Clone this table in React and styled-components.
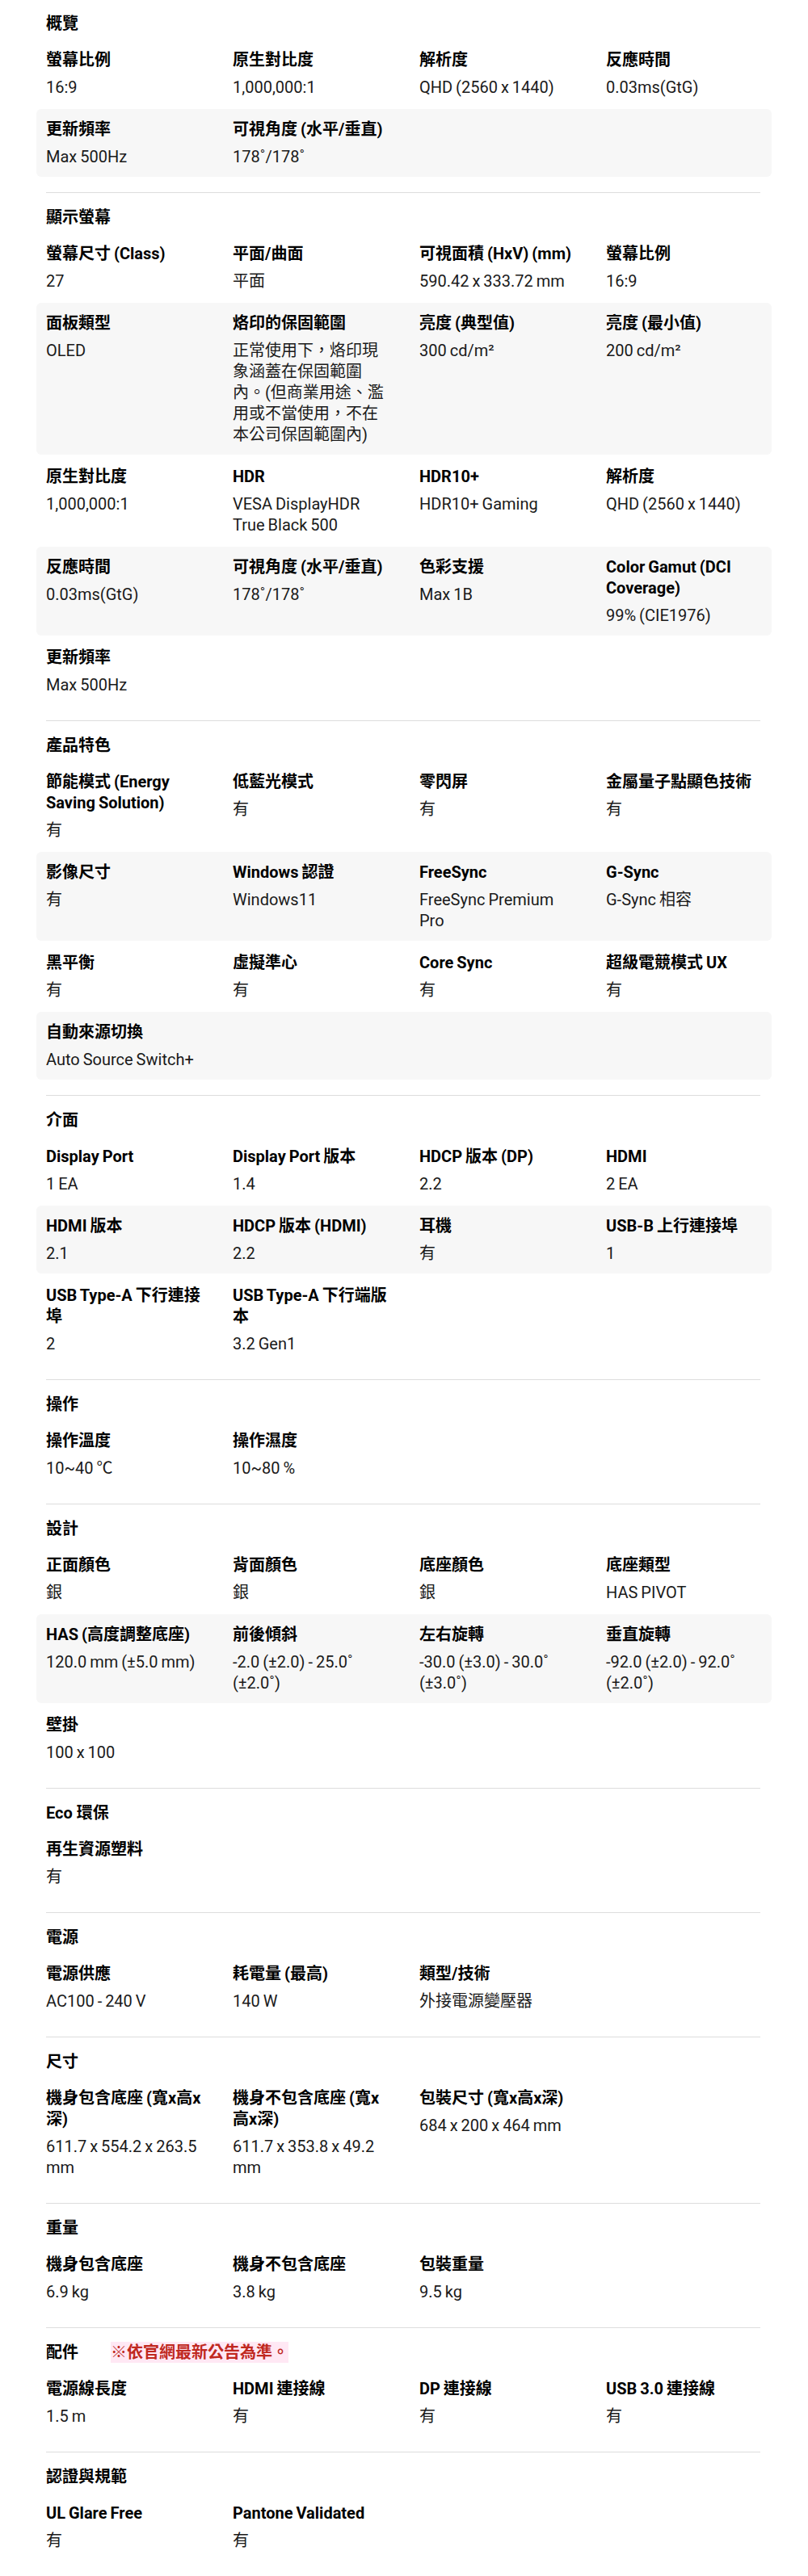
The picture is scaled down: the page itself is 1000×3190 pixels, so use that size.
import React from "react";
import styled, { createGlobalStyle } from "styled-components";

const GlobalStyle = createGlobalStyle`
  body {
    margin: 0;
    background: #fff;
    color: #000;
    font-family: Roboto, "Noto Sans CJK TC", sans-serif;
    -webkit-font-smoothing: antialiased;
  }
`;

const Page = styled.div`
  width: 910px;
  padding: 0 0 16px 45px;
`;

const Section = styled.section`
  padding: ${(p) => (p.$first ? "16px" : "17px")} 0 19px;
`;

const Divider = styled.hr`
  margin: 0 14px 0 12px;
  border: 0;
  border-top: 1px solid #dddddd;
`;

const Heading = styled.h3`
  display: flex;
  align-items: center;
  gap: 40px;
  margin: 0 0 7px 12px;
  font-size: 20px;
  line-height: 26px;
  font-weight: 700;
`;

const Note = styled.span`
  color: #c0281f;
  background: #ffe8f4;
  font-weight: 700;
`;

const Rows = styled.div`
  display: flex;
  flex-direction: column;
  gap: 2px;
`;

const Row = styled.div`
  display: grid;
  grid-template-columns: repeat(4, 231px);
  padding: 12px 0 12px 12px;
  border-radius: 6px;
  background: ${(p) => (p.$shaded ? "#f7f7f7" : "transparent")};
`;

const Item = styled.div`
  display: flex;
  flex-direction: column;
  gap: 8px;
  padding-right: 34px;
  font-size: 20px;
  line-height: 26px;
  word-spacing: -1px;
`;

const Label = styled.div`
  font-weight: 700;
`;

const Value = styled.div`
  font-weight: 400;
  color: #1a1a1a;
`;

const specs = [
  {
    title: "概覽",
    rows: [
      [
        ["螢幕比例", "16:9"],
        ["原生對比度", "1,000,000:1"],
        ["解析度", "QHD (2560 x 1440)"],
        ["反應時間", "0.03ms(GtG)"],
      ],
      [
        ["更新頻率", "Max 500Hz"],
        ["可視角度 (水平/垂直)", "178˚/178˚"],
      ],
    ],
  },
  {
    title: "顯示螢幕",
    rows: [
      [
        ["螢幕尺寸 (Class)", "27"],
        ["平面/曲面", "平面"],
        ["可視面積 (HxV) (mm)", "590.42 x 333.72 mm"],
        ["螢幕比例", "16:9"],
      ],
      [
        ["面板類型", "OLED"],
        ["烙印的保固範圍", "正常使用下，烙印現象涵蓋在保固範圍內。(但商業用途、濫用或不當使用，不在本公司保固範圍內)"],
        ["亮度 (典型值)", "300 cd/m²"],
        ["亮度 (最小值)", "200 cd/m²"],
      ],
      [
        ["原生對比度", "1,000,000:1"],
        ["HDR", "VESA DisplayHDR True Black 500"],
        ["HDR10+", "HDR10+ Gaming"],
        ["解析度", "QHD (2560 x 1440)"],
      ],
      [
        ["反應時間", "0.03ms(GtG)"],
        ["可視角度 (水平/垂直)", "178˚/178˚"],
        ["色彩支援", "Max 1B"],
        ["Color Gamut (DCI Coverage)", "99% (CIE1976)"],
      ],
      [["更新頻率", "Max 500Hz"]],
    ],
  },
  {
    title: "產品特色",
    rows: [
      [
        ["節能模式 (Energy Saving Solution)", "有"],
        ["低藍光模式", "有"],
        ["零閃屏", "有"],
        ["金屬量子點顯色技術", "有"],
      ],
      [
        ["影像尺寸", "有"],
        ["Windows 認證", "Windows11"],
        ["FreeSync", "FreeSync Premium Pro"],
        ["G-Sync", "G-Sync 相容"],
      ],
      [
        ["黑平衡", "有"],
        ["虛擬準心", "有"],
        ["Core Sync", "有"],
        ["超級電競模式 UX", "有"],
      ],
      [["自動來源切換", "Auto Source Switch+"]],
    ],
  },
  {
    title: "介面",
    rows: [
      [
        ["Display Port", "1 EA"],
        ["Display Port 版本", "1.4"],
        ["HDCP 版本 (DP)", "2.2"],
        ["HDMI", "2 EA"],
      ],
      [
        ["HDMI 版本", "2.1"],
        ["HDCP 版本 (HDMI)", "2.2"],
        ["耳機", "有"],
        ["USB-B 上行連接埠", "1"],
      ],
      [
        ["USB Type-A 下行連接埠", "2"],
        ["USB Type-A 下行端版本", "3.2 Gen1"],
      ],
    ],
  },
  {
    title: "操作",
    rows: [
      [
        ["操作溫度", "10~40 ℃"],
        ["操作濕度", "10~80 %"],
      ],
    ],
  },
  {
    title: "設計",
    rows: [
      [
        ["正面顏色", "銀"],
        ["背面顏色", "銀"],
        ["底座顏色", "銀"],
        ["底座類型", "HAS PIVOT"],
      ],
      [
        ["HAS (高度調整底座)", "120.0 mm (±5.0 mm)"],
        ["前後傾斜", "-2.0 (±2.0) - 25.0˚ (±2.0˚)"],
        ["左右旋轉", "-30.0 (±3.0) - 30.0˚ (±3.0˚)"],
        ["垂直旋轉", "-92.0 (±2.0) - 92.0˚ (±2.0˚)"],
      ],
      [["壁掛", "100 x 100"]],
    ],
  },
  {
    title: "Eco 環保",
    rows: [[["再生資源塑料", "有"]]],
  },
  {
    title: "電源",
    rows: [
      [
        ["電源供應", "AC100 - 240 V"],
        ["耗電量 (最高)", "140 W"],
        ["類型/技術", "外接電源變壓器"],
      ],
    ],
  },
  {
    title: "尺寸",
    rows: [
      [
        ["機身包含底座 (寬x高x深)", "611.7 x 554.2 x 263.5 mm"],
        ["機身不包含底座 (寬x高x深)", "611.7 x 353.8 x 49.2 mm"],
        ["包裝尺寸 (寬x高x深)", "684 x 200 x 464 mm"],
      ],
    ],
  },
  {
    title: "重量",
    rows: [
      [
        ["機身包含底座", "6.9 kg"],
        ["機身不包含底座", "3.8 kg"],
        ["包裝重量", "9.5 kg"],
      ],
    ],
  },
  {
    title: "配件",
    note: "※依官網最新公告為準。",
    rows: [
      [
        ["電源線長度", "1.5 m"],
        ["HDMI 連接線", "有"],
        ["DP 連接線", "有"],
        ["USB 3.0 連接線", "有"],
      ],
    ],
  },
  {
    title: "認證與規範",
    rows: [
      [
        ["UL Glare Free", "有"],
        ["Pantone Validated", "有"],
      ],
    ],
  },
];

function SpecSection({ title, note, rows, first }) {
  return (
    <Section $first={first}>
      <Heading>
        {title}
        {note && <Note>{note}</Note>}
      </Heading>
      <Rows>
        {rows.map((row, i) => (
          <Row key={i} $shaded={i % 2 === 1}>
            {row.map(([label, value]) => (
              <Item key={label}>
                <Label>{label}</Label>
                <Value>{value}</Value>
              </Item>
            ))}
          </Row>
        ))}
      </Rows>
    </Section>
  );
}

export default function App() {
  return (
    <Page>
      <GlobalStyle />
      {specs.map((s, i) => (
        <React.Fragment key={s.title}>
          {i > 0 && <Divider />}
          <SpecSection {...s} first={i === 0} />
        </React.Fragment>
      ))}
    </Page>
  );
}
